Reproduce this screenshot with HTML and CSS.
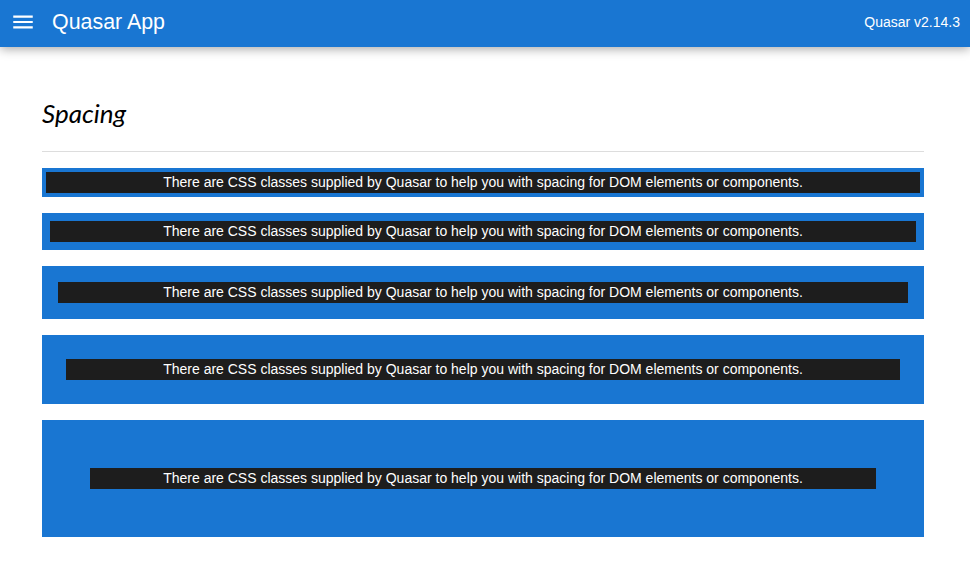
FILE: index.html
```html
<!DOCTYPE html>
<html lang="en">
<head>
    <meta charset="UTF-8">
    <meta name="viewport" content="width=device-width, initial-scale=1.0">
    <title>Quasar App</title>

    <link rel="stylesheet" href="styles.css">
</head>
<body>
    <header class="header">
        <button class="menu-btn" aria-label="Menu">
            <svg width="26" height="26" viewBox="0 0 24 24" fill="currentColor"><path d="M3 18h18v-2H3v2zm0-5h18v-2H3v2zm0-7v2h18V6H3z"/></svg>
        </button>
        <div class="title">Quasar App</div>
        <div class="version">Quasar v2.14.3</div>
    </header>

    <main class="page">
        <h1 class="heading">Spacing</h1>
        <hr class="divider">

        <div class="box pad-xs"><div class="text">There are CSS classes supplied by Quasar to help you with spacing for DOM elements or components.</div></div>
        <div class="box pad-sm"><div class="text">There are CSS classes supplied by Quasar to help you with spacing for DOM elements or components.</div></div>
        <div class="box pad-md"><div class="text">There are CSS classes supplied by Quasar to help you with spacing for DOM elements or components.</div></div>
        <div class="box pad-lg"><div class="text">There are CSS classes supplied by Quasar to help you with spacing for DOM elements or components.</div></div>
        <div class="box pad-xl"><div class="text">There are CSS classes supplied by Quasar to help you with spacing for DOM elements or components.</div></div>
    </main>
</body>
</html>
```

FILE: styles.css
```css
body{
    margin: 0;
    font-family: "Liberation Sans", Arial, sans-serif;
    font-size: 14px;
    line-height: 21px;
    background: #fff;
    color: #000;
}

.header{
    height: 44px;
    padding: 0 10px 3px;
    display: flex;
    align-items: center;
    background: #1976d2;
    color: #fff;
    box-shadow: 0 2px 10px rgba(0, 0, 0, 0.35);
}

.menu-btn{
    width: 26px;
    height: 26px;
    padding: 0;
    border: 0;
    display: flex;
    justify-content: center;
    background: none;
    color: inherit;
}

.title{
    flex: 1;
    padding-left: 16px;
    font-size: 21.4px;
    line-height: 30px;
}

.page{
    padding: 42px 46px 29px 42px;
}

.heading{
    margin: 0;
    height: 48px;
    font-family: "Lato", sans-serif;
    font-style: italic;
    font-size: 26px;
    font-weight: 400;
    line-height: 48px;
}

.divider{
    margin: 14px 0 16px;
    height: 1px;
    border: 0;
    background: #ddd;
}

.box{
    margin-bottom: 16px;
    background: #1976d2;
}

.text{
    text-align: center;
    background: #1d1d1d;
    color: #fff;
}

.pad-xs{
    padding: 4px;
}

.pad-sm{
    padding: 8px;
}

.pad-md{
    padding: 16px;
}

.pad-lg{
    padding: 24px;
}

.pad-xl{
    padding: 48px;
}
```
